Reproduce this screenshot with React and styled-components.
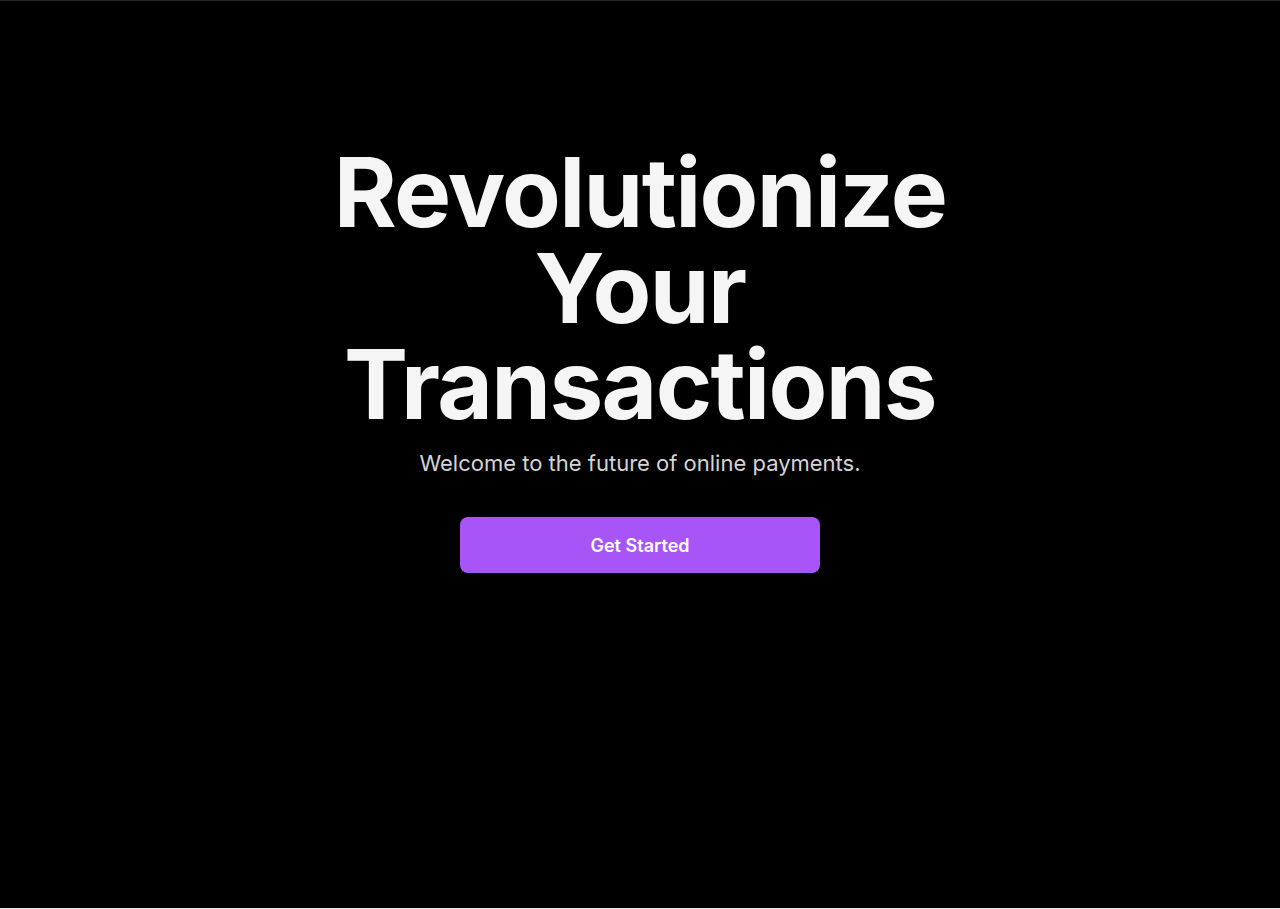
import styled, { createGlobalStyle } from "styled-components";

const GlobalStyle = createGlobalStyle`
  html, body {
    margin: 0;
    padding: 0;
    background: #e5e5e5;
    font-family: Inter, "Noto Sans", sans-serif;
  }
`;

const Hero = () => {
  return (
    <Container>
      <h1 className="title">
        Revolutionize
        <br />
        Your
        <br />
        Transactions
      </h1>
      <p className="subtitle">Welcome to the future of online payments.</p>
      <Button>Get Started</Button>
    </Container>
  );
};

const App = () => {
  return (
    <>
      <GlobalStyle />
      <Hero />
    </>
  );
};

export default App;

const Container = styled.section`
  box-sizing: border-box;
  height: 908px;
  background: #000;
  border-top: 1px solid #262626;
  display: flex;
  flex-direction: column;
  align-items: center;
  text-align: center;
  padding-top: 143px;

  .title {
    margin: 0;
    font-size: 96px;
    line-height: 96px;
    font-weight: 700;
    letter-spacing: -0.017em;
    color: #f5f5f5;
  }

  .subtitle {
    margin: 17px 0 0;
    font-size: 22px;
    line-height: 28px;
    color: #d4d4d4;
  }
`;

const Button = styled.button`
  margin-top: 40px;
  width: 360px;
  height: 56px;
  border: none;
  border-radius: 8px;
  background: #a855f7;
  color: #fff;
  font-family: Inter, "Noto Sans", sans-serif;
  font-size: 18px;
  font-weight: 600;
  cursor: pointer;
`;
